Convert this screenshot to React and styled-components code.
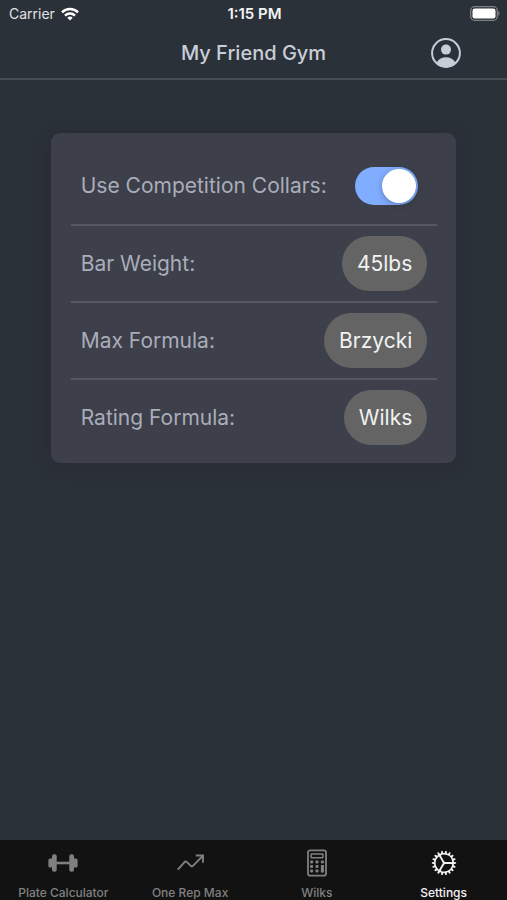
import React, { useState } from 'react'
import styled, { createGlobalStyle } from 'styled-components'
import { IoCogOutline } from 'react-icons/io5'

const GlobalStyle = createGlobalStyle`
  * {
    box-sizing: border-box;
  }
  body {
    margin: 0;
    background: #2b3138;
    font-family: Inter, "Liberation Sans", sans-serif;
  }
  button {
    font-family: inherit;
  }
`

const Page = styled.div`
  min-height: 100vh;
  display: flex;
  flex-direction: column;
  background: #2b3138;
`

const StatusBar = styled.div`
  display: grid;
  grid-template-columns: 1fr auto 1fr;
  align-items: center;
  height: 27px;
  padding: 0 7px 0 9px;
  font-size: 14px;
  color: #e0e2e5;
`

const Carrier = styled.div`
  display: flex;
  align-items: center;
  gap: 6px;
`

const Time = styled.span`
  font-size: 15px;
  font-weight: 600;
  color: #f2f3f4;
`

const Battery = styled.svg`
  justify-self: end;
`

const Header = styled.header`
  display: grid;
  grid-template-columns: 1fr auto 1fr;
  align-items: center;
  height: 53px;
  padding-right: 46px;
  padding-left: 46px;
  border-bottom: 2px solid #484c53;
`

const Title = styled.h1`
  grid-column: 2;
  margin: 0;
  font-size: 20px;
  font-weight: 500;
  color: #c9ced9;
`

const ProfileButton = styled.button`
  justify-self: end;
  display: flex;
  padding: 0;
  border: none;
  background: none;
  color: #c6cdd8;
  cursor: pointer;
`

const Content = styled.main`
  flex: 1;
  padding: 53px 10%;
`

const Card = styled.section`
  padding: 14px 19px 8px 20px;
  border-radius: 9px;
  background: #3d3f4a;
  box-shadow: 0 4px 16px rgba(38, 38, 46, 0.45);
`

const Row = styled.div`
  display: flex;
  align-items: center;
  justify-content: space-between;
  min-height: 77px;
  padding: 10px;
  font-size: 21px;
  color: #a9adb9;

  & + & {
    border-top: 2px solid #555863;
  }
`

const Toggle = styled.input`
  appearance: none;
  display: flex;
  align-items: center;
  width: 63px;
  height: 38px;
  margin: 0 9px 0 0;
  padding: 2px;
  border-radius: 19px;
  background: #6a6d76;
  cursor: pointer;

  &::before {
    content: "";
    width: 34px;
    height: 34px;
    border-radius: 50%;
    background: #fff;
    box-shadow: 0 2px 6px rgba(0, 0, 0, 0.25);
  }

  &:checked {
    justify-content: flex-end;
    background: #80adff;
  }
`

const Pill = styled.button`
  height: 55px;
  padding: 0 15px;
  border: none;
  border-radius: 28px;
  background: #636463;
  font-size: 21px;
  color: #f1f2f2;
  cursor: pointer;
`

const TabBar = styled.nav`
  display: grid;
  grid-template-columns: repeat(4, 1fr);
  height: 60px;
  background: #121212;
`

const Tab = styled.a`
  display: flex;
  flex-direction: column;
  align-items: center;
  gap: 7px;
  padding-top: 8px;
  font-size: 12px;
  font-weight: 500;
  line-height: 15px;
  white-space: nowrap;
  text-decoration: none;
  color: ${(props) => (props.$active ? '#f2f2f2' : '#808080')};

  svg {
    flex: none;
  }
`

function WifiIcon() {
  return (
    <svg width="18" height="14" viewBox="0 0 18 14" fill="none" stroke="#fff" strokeWidth="2.5">
      <path d="M1 5.4a11.4 11.4 0 0 1 16 0" />
      <path d="M4 8.6a7.2 7.2 0 0 1 10 0" />
      <path d="M9 13.6l-2.7-2.8a3.9 3.9 0 0 1 5.4 0z" fill="#fff" stroke="none" />
    </svg>
  )
}

function BatteryIcon() {
  return (
    <Battery width="30" height="15" viewBox="0 0 30 15">
      <rect x="0.7" y="0.7" width="26.6" height="13.6" rx="4" fill="none" stroke="#7d8085" strokeWidth="1.3" />
      <rect x="2.5" y="2.5" width="23" height="10" rx="2.2" fill="#fff" />
      <path d="M28.3 5.2c1.8.7 1.8 3.9 0 4.6z" fill="#7d8085" />
    </Battery>
  )
}

function ProfileIcon() {
  return (
    <svg width="30" height="30" viewBox="0 0 30 30">
      <circle cx="15" cy="15" r="13.9" fill="none" stroke="currentColor" strokeWidth="2" />
      <circle cx="15" cy="11.6" r="5" fill="currentColor" />
      <path d="M5.8 24.2C7.8 20.8 11.2 19.2 15 19.2s7.200 1.600 9.200 5C21.800 27.600 18.700 29.300 15 29.300s-6.800-1.700-9.200-5.100z" fill="currentColor" />
    </svg>
  )
}

function BarbellIcon() {
  return (
    <svg width="30" height="30" viewBox="0 0 30 30" fill="currentColor">
      <rect x="0.4" y="10.5" width="4.5" height="9" rx="1.6" />
      <rect x="4" y="6.2" width="4.7" height="17.600" rx="2" />
      <rect x="8" y="13.7" width="14" height="2.6" />
      <rect x="21.3" y="6.2" width="4.7" height="17.600" rx="2" />
      <rect x="25.1" y="10.5" width="4.5" height="9" rx="1.6" />
    </svg>
  )
}

function TrendIcon() {
  return (
    <svg width="30" height="30" viewBox="0 0 30 30" fill="none" stroke="currentColor" strokeWidth="1.9">
      <path d="M2.8 21.600l6.500-7.300c.9-1 1.800-1 2.700-.1l3.500 3.500c.9.9 1.800.9 2.700 0L27.600 8" />
      <path d="M20.800 7.500h7.200V14.800" />
    </svg>
  )
}

function CalculatorIcon() {
  return (
    <svg width="30" height="30" viewBox="0 0 30 30" fill="currentColor">
      <rect x="6" y="2.300" width="18" height="25.400" rx="2.200" fill="none" stroke="currentColor" strokeWidth="1.800" />
      <rect x="9.100" y="6" width="11.800" height="3.800" rx="0.600" fill="none" stroke="currentColor" strokeWidth="1.500" />
      {[13.9, 18.400, 22.900].map((cy) =>
        [9.600, 15, 20.400].map((cx) => (
          <rect key={`${cx}-${cy}`} x={cx - 1.500} y={cy - 1.500} width="3" height="3" rx="0.800" />
        ))
      )}
      <rect x="18.900" y="17" width="3" height="7.400" rx="0.800" />
    </svg>
  )
}

const settings = [
  { label: 'Bar Weight:', value: '45lbs' },
  { label: 'Max Formula:', value: 'Brzycki' },
  { label: 'Rating Formula:', value: 'Wilks' },
]

const tabs = [
  { label: 'Plate Calculator', icon: <BarbellIcon /> },
  { label: 'One Rep Max', icon: <TrendIcon /> },
  { label: 'Wilks', icon: <CalculatorIcon /> },
  { label: 'Settings', icon: <IoCogOutline size={30} />, active: true },
]

function App() {
  const [collars, setCollars] = useState(true)

  return (
    <Page>
      <GlobalStyle />
      <StatusBar>
        <Carrier>
          Carrier
          <WifiIcon />
        </Carrier>
        <Time>1:15 PM</Time>
        <BatteryIcon />
      </StatusBar>
      <Header>
        <Title>My Friend Gym</Title>
        <ProfileButton aria-label="Profile">
          <ProfileIcon />
        </ProfileButton>
      </Header>
      <Content>
        <Card>
          <Row>
            <label htmlFor="collars">Use Competition Collars:</label>
            <Toggle
              id="collars"
              type="checkbox"
              role="switch"
              checked={collars}
              onChange={(e) => setCollars(e.target.checked)}
            />
          </Row>
          {settings.map((item, i) => (
            <Row key={item.label}>
              <label htmlFor={`setting-${i}`}>{item.label}</label>
              <Pill id={`setting-${i}`} type="button">{item.value}</Pill>
            </Row>
          ))}
        </Card>
      </Content>
      <TabBar>
        {tabs.map((tab) => (
          <Tab key={tab.label} href="#" $active={tab.active} aria-current={tab.active ? 'page' : undefined}>
            {tab.icon}
            {tab.label}
          </Tab>
        ))}
      </TabBar>
    </Page>
  )
}

export default App
